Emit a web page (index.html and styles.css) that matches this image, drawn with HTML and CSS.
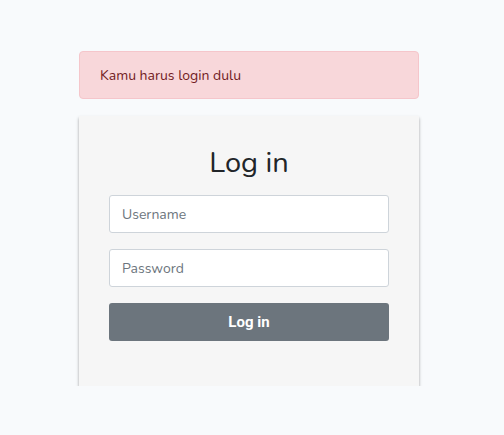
FILE: index.html
```html
<!DOCTYPE html>
<html>
<head>
<meta charset="utf-8">
<link rel="stylesheet" href="styles.css">
</head>
<body>
<div class="wrap">
  <div class="alert">Kamu harus login dulu</div>
  <div class="card">
    <h1 class="title">Log in</h1>
    <form class="form">
      <input class="input" type="text" placeholder="Username">
      <input class="input" type="password" placeholder="Password">
      <button class="btn" type="button">Log in</button>
    </form>
  </div>
</div>
</body>
</html>
```

FILE: styles.css
```css
html, body {
  margin: 0;
  background: #f8fafc;
  font-family: Nunito, Lato, "Open Sans", sans-serif;
  color: #212529;
}
.wrap {
  width: 340px;
  margin: 51px 0 0 79px;
}
.alert {
  box-sizing: border-box;
  height: 48px;
  padding: 0 20px;
  display: flex;
  align-items: center;
  background: #f8d7da;
  border: 1px solid #f5c6cb;
  border-radius: 4px;
  color: #721c24;
  font-size: 14px;
  margin-bottom: 17px;
}
.card {
  box-sizing: border-box;
  height: 270px;
  background: #f6f6f6;
  padding: 29px 30px;
  box-shadow: 0 2px 3px rgba(0,0,0,0.35);
}
.title {
  margin: 0 0 14px;
  text-align: center;
  font-weight: 400;
  font-size: 29px;
  line-height: 36px;
  color: #212529;
}
.form {
  display: flex;
  flex-direction: column;
  gap: 16px;
}
.input {
  box-sizing: border-box;
  height: 38px;
  width: 100%;
  margin: 0;
  padding: 0 12px;
  border: 1px solid #ced4da;
  border-radius: 3px;
  background: #fff;
  font-family: inherit;
  font-size: 14px;
  color: #495057;
}
.input::placeholder {
  color: #6c757d;
}
.btn {
  height: 38px;
  width: 100%;
  border: 0;
  border-radius: 3px;
  background: #6c757d;
  color: #fff;
  font-family: Roboto, sans-serif;
  font-weight: 700;
  font-size: 15px;
}
```
